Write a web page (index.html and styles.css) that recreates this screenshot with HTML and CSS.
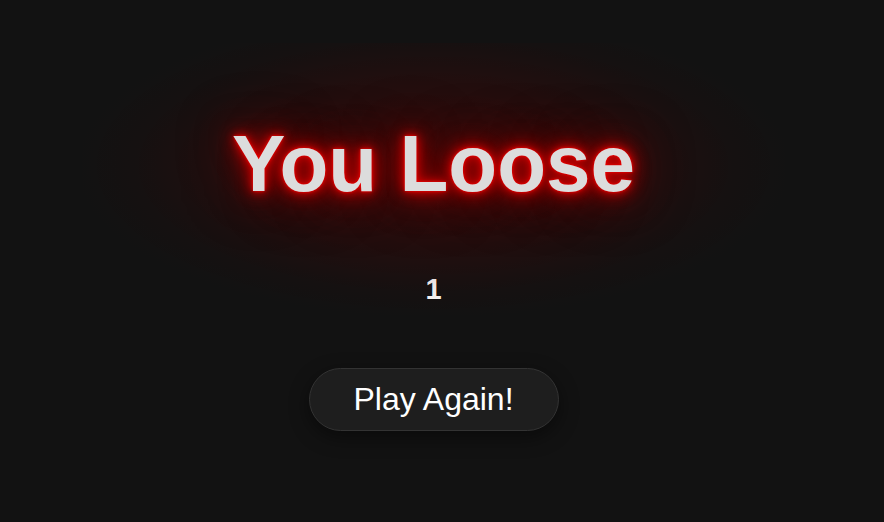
FILE: index.html
```html
<!DOCTYPE html>
<html lang="en">
<head>
<meta charset="utf-8">
<title>You Loose</title>
<link rel="stylesheet" href="styles.css">
</head>
<body>
<main class="screen">
  <h1 class="title">You Loose</h1>
  <div class="score">1</div>
  <button class="again">Play Again!</button>
</main>
</body>
</html>
```
FILE: styles.css
```css
html, body {
  margin: 0;
  height: 100%;
  background: #121212;
}
.screen {
  display: flex;
  flex-direction: column;
  align-items: center;
  padding-top: 118px;
  padding-right: 17px;
  font-family: "Liberation Sans", Arial, sans-serif;
}
.title {
  position: relative;
  z-index: 0;
  margin: 0;
  font-size: 80px;
  font-weight: bold;
  line-height: 92px;
  color: #dcdcdc;
  text-shadow: 0 0 3px #ff0000, 0 0 8px #dd0000, 0 0 16px #bb0000, 0 0 26px #990000, 0 0 40px #700000, 0 0 60px #500000;
}
.title::before {
  content: "";
  position: absolute;
  z-index: -1;
  left: -150px;
  right: -150px;
  top: -75px;
  bottom: -105px;
  background: radial-gradient(ellipse at 50% 45%, rgba(110, 0, 0, 0.4) 0%, rgba(90, 0, 0, 0.22) 40%, rgba(60, 0, 0, 0.08) 60%, rgba(18, 18, 18, 0) 72%);
}
.score {
  margin-top: 62px;
  font-size: 29px;
  font-weight: bold;
  line-height: 34px;
  color: #ffffff;
}
.again {
  margin-top: 62px;
  width: 250px;
  height: 63px;
  padding: 0;
  font-family: "Liberation Sans", Arial, sans-serif;
  font-size: 32px;
  color: #ffffff;
  background: #1e1e1e;
  border: 1px solid #333333;
  border-radius: 32px;
  box-shadow: 0 6px 20px rgba(0, 0, 0, 0.45);
}
```
